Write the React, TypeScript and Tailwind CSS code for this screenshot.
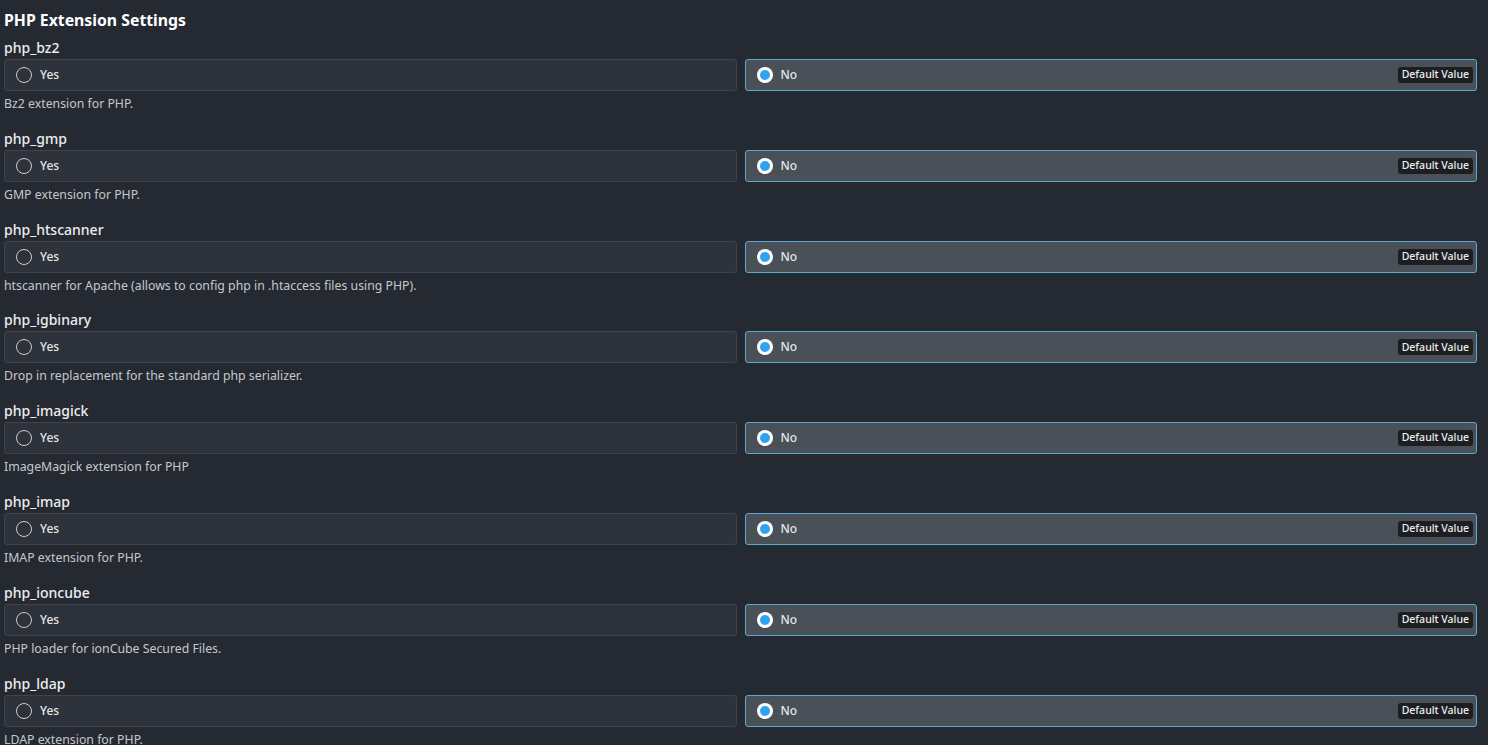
const settings = [
    { name: "php_bz2", description: "Bz2 extension for PHP." },
    { name: "php_gmp", description: "GMP extension for PHP." },
    {
        name: "php_htscanner",
        description: "htscanner for Apache (allows to config php in .htaccess files using PHP).",
    },
    { name: "php_igbinary", description: "Drop in replacement for the standard php serializer." },
    { name: "php_imagick", description: "ImageMagick extension for PHP" },
    { name: "php_imap", description: "IMAP extension for PHP." },
    { name: "php_ioncube", description: "PHP loader for ionCube Secured Files." },
    { name: "php_ldap", description: "LDAP extension for PHP." },
];

type OptionProps = {
    label: string;
    checked: boolean;
    isDefault?: boolean;
};

const RadioOption = ({ label, checked, isDefault }: OptionProps) => {
    return (
        <div
            className={
                checked
                    ? "flex-1 h-[32px] flex items-center pl-[11px] pr-[3px] rounded-[3px] border border-[#5ea6d6] bg-[#4a5058]"
                    : "flex-1 h-[32px] flex items-center pl-[11px] pr-[3px] rounded-[3px] border border-[#3e434c] bg-[#2e323a]"
            }
        >
            {checked ? (
                <span className="w-[16px] h-[16px] rounded-full bg-white flex items-center justify-center">
                    <span className="w-[10px] h-[10px] rounded-full bg-[#2ea3f2]" />
                </span>
            ) : (
                <span className="w-[16px] h-[16px] rounded-full border-[1.5px] border-[#c9ccd1]" />
            )}
            <span className="ml-[8px] text-[12px] font-medium text-[#e6e7e9]">{label}</span>
            {isDefault && (
                <span className="ml-auto h-[16px] px-[4px] flex items-center rounded-[3px] bg-[#1c1e22] text-[10.5px] font-medium text-[#eeeeee]">
                    Default Value
                </span>
            )}
        </div>
    );
};

export default function App() {
    return (
        <div
            className="min-h-[745px] w-full bg-[#252932] pl-[4px] pr-[11px] pt-[8px] overflow-hidden"
            style={{ fontFamily: '"Noto Sans", "Open Sans", sans-serif' }}
        >
            <h1 className="h-[24px] leading-[24px] text-[15.8px] font-bold text-white">
                PHP Extension Settings
            </h1>
            <div className="flex flex-col gap-[16.8px] mt-[6px]">
                {settings.map((setting) => (
                    <div key={setting.name}>
                        <div className="h-[20px] leading-[20px] text-[14px] font-medium text-[#eceef0]">
                            {setting.name}
                        </div>
                        <div className="flex gap-[8px] mt-[1px]">
                            <RadioOption label="Yes" checked={false} />
                            <RadioOption label="No" checked={true} isDefault />
                        </div>
                        <div className="mt-[5px] h-[16px] leading-[16px] text-[12.3px] text-[#c5c8cc]">
                            {setting.description}
                        </div>
                    </div>
                ))}
            </div>
        </div>
    );
}
